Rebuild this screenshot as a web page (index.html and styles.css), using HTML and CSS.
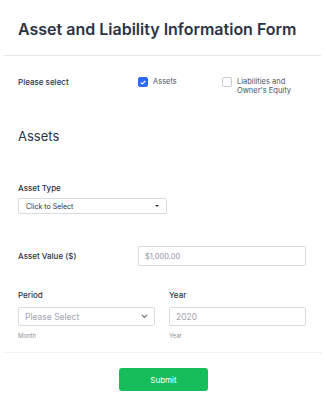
FILE: index.html
```html
<!DOCTYPE html>
<html lang="en">
<head>
    <meta charset="UTF-8">
    <meta name="viewport" content="width=device-width, initial-scale=1.0">
    <title>Asset and Liability Information Form</title>
    <link rel="stylesheet" href="styles.css">
</head>
<body>
    <div class="header">
        <h1>Asset and Liability Information Form</h1>
    </div>

    <form class="form">
        <div class="choice-row">
            <span class="field-label">Please select</span>
            <label class="option option-first">
                <span class="box checked">
                    <svg width="6" height="5" viewBox="0 0 6 5"><path d="M0.8 2.6 L2.3 4 L5.2 1" fill="none" stroke="#fff" stroke-width="1.1"/></svg>
                </span>
                <span>Assets</span>
            </label>
            <label class="option">
                <span class="box"></span>
                <span>Liabilities and<br>Owner's Equity</span>
            </label>
        </div>

        <h2 class="section-title">Assets</h2>

        <div class="field-label label-block">Asset Type</div>
        <div class="dropdown">
            <span>Click to Select</span>
            <span class="caret"></span>
        </div>

        <div class="value-row">
            <span class="field-label">Asset Value ($)</span>
            <div class="text-input">$1,000.00</div>
        </div>

        <div class="pair">
            <div class="col">
                <div class="field-label">Period</div>
                <div class="text-input select-input">
                    <span>Please Select</span>
                    <svg width="7" height="5" viewBox="0 0 7 5"><path d="M1 1 L3.5 3.5 L6 1" fill="none" stroke="#6b7280" stroke-width="1.1"/></svg>
                </div>
                <div class="sublabel">Month</div>
            </div>
            <div class="col">
                <div class="field-label">Year</div>
                <div class="text-input">2020</div>
                <div class="sublabel">Year</div>
            </div>
        </div>

        <div class="divider"></div>

        <div class="actions">
            <button type="button" class="submit">Submit</button>
        </div>
    </form>
</body>
</html>
```
FILE: styles.css
```css
body {
    font-family: Inter, "Noto Sans", sans-serif;
    background-color: #fff;
    color: #2c3345;
    margin: 0;
    padding: 0;
}

.header {
    margin: 0 4px;
    padding: 18px 14px 15px;
    border-bottom: 1px solid #e7e8ec;
}

.header h1 {
    margin: 0;
    font-size: 16px;
    line-height: 22px;
    font-weight: 600;
}

.form {
    padding: 0 18px;
}

.field-label {
    font-size: 8px;
    line-height: 10px;
    font-weight: 500;
}

.choice-row {
    display: flex;
    margin-top: 21px;
}

.choice-row .field-label {
    width: 120px;
}

.option {
    display: flex;
    gap: 5px;
    font-size: 7.5px;
    line-height: 9px;
    color: #4b5262;
}

.option-first {
    width: 84px;
}

.box {
    width: 10px;
    height: 10px;
    box-sizing: border-box;
    border: 1px solid #c8cbd3;
    border-radius: 2px;
    display: flex;
    align-items: center;
    justify-content: center;
}

.box.checked {
    background-color: #2e69ff;
    border-color: #2e69ff;
}

.section-title {
    margin: 33px 0 0;
    font-size: 13px;
    line-height: 16px;
    font-weight: 400;
}

.label-block {
    margin-top: 39px;
}

.dropdown {
    margin-top: 5px;
    width: 149px;
    height: 16px;
    box-sizing: border-box;
    border: 1px solid #d9dbe2;
    border-radius: 2px;
    padding: 0 7px;
    display: flex;
    align-items: center;
    justify-content: space-between;
    font-size: 7px;
}

.caret {
    width: 0;
    height: 0;
    border-left: 2px solid transparent;
    border-right: 2px solid transparent;
    border-top: 2px solid #2c3345;
}

.value-row {
    display: flex;
    align-items: center;
    margin-top: 32px;
}

.value-row .field-label {
    width: 120px;
}

.text-input {
    height: 20px;
    box-sizing: border-box;
    border: 1px solid #d9dbe2;
    border-radius: 2px;
    padding: 0 6px;
    display: flex;
    align-items: center;
    font-size: 7.5px;
    color: #8f949f;
}

.value-row .text-input {
    width: 168px;
}

.pair {
    display: flex;
    gap: 14px;
    margin-top: 24px;
}

.col {
    width: 137px;
}

.col .text-input {
    margin-top: 7px;
    height: 19px;
    font-size: 8.5px;
    color: #a1a5af;
}

.select-input {
    justify-content: space-between;
}

.sublabel {
    margin-top: 6px;
    font-size: 6px;
    line-height: 8px;
    color: #8d9099;
}

.divider {
    margin: 12px -14px 0;
    border-top: 1px dotted #e4e5ea;
}

.actions {
    display: flex;
    justify-content: center;
    margin-top: 15px;
}

.submit {
    width: 89px;
    height: 23px;
    margin-left: 2px;
    border: none;
    border-radius: 3px;
    background-color: #18bd5b;
    color: #fff;
    font-family: Inter, sans-serif;
    font-size: 8px;
    cursor: pointer;
}
```
